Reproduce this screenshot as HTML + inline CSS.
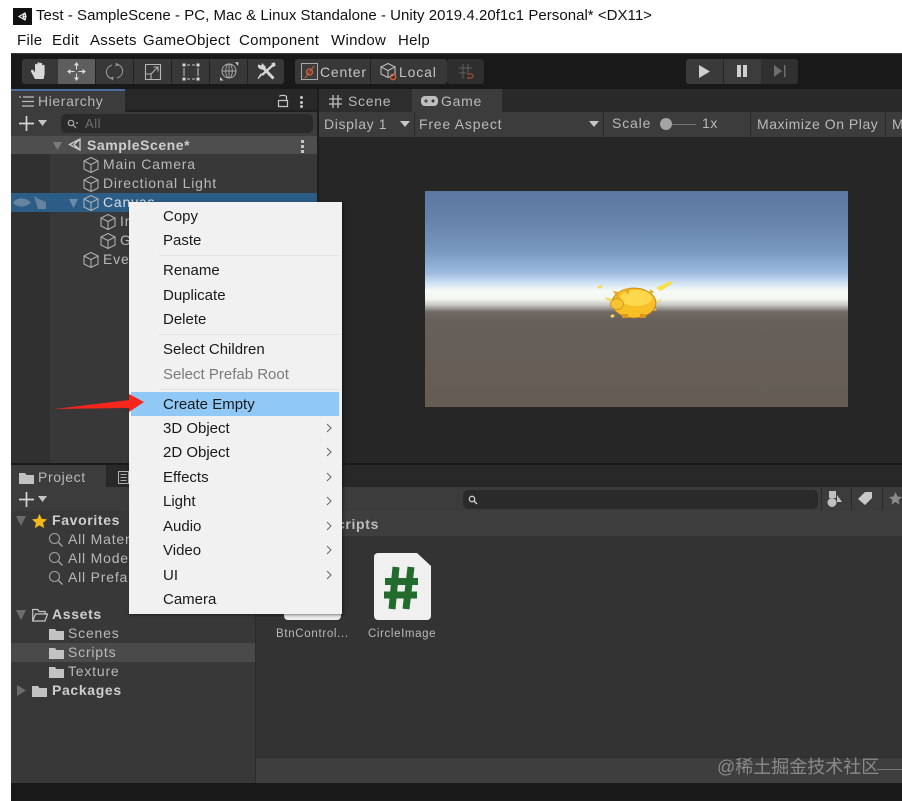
<!DOCTYPE html>
<html><head><meta charset="utf-8"><style>
html,body{margin:0;padding:0;background:#fff}
#r{position:relative;width:902px;height:801px;overflow:hidden;background:#fff;font-family:"Liberation Sans","Noto Sans CJK SC",sans-serif;filter:blur(.35px)}
#r div,#r span,#r svg{position:absolute}
.t{white-space:nowrap;color:#b9b9b9;font-size:14px;line-height:18px;letter-spacing:.8px}
.w{color:#cecece;font-weight:bold;letter-spacing:.65px}
.m{white-space:nowrap;color:#1a1a1a;font-size:15px;line-height:20px;left:163px}
.h{white-space:nowrap;color:#111;font-size:15px;line-height:18px;top:32px;letter-spacing:.3px}
.a{left:324px;width:10px;height:12px}
.c{width:18px;height:18px}
.s{width:16px;height:16px}
.f{width:15px;height:12px}
</style></head><body><div id="r">
<svg width="0" height="0"><defs>
<symbol id="cube" viewBox="0 0 18 18"><path d="M9 1.500 16 5v8l-7 3.500L2 13V5zM2 5l7 3.500L16 5M9 8.500v8" fill="none" stroke="#adadad" stroke-width="1.100"/></symbol>
<symbol id="mag" viewBox="0 0 16 16"><circle cx="6.500" cy="6.500" r="5" fill="none" stroke="#a0a0a0" stroke-width="1.100"/><path d="M10.500 10.500 14.500 14.500" stroke="#a0a0a0" stroke-width="1.500"/></symbol>
<symbol id="fold" viewBox="0 0 15 12"><path d="M0 1h6l1.500 2H15v9H0z" fill="#c2c2c2"/></symbol>
<symbol id="ch" viewBox="0 0 10 12"><path d="M3 2 7 6l-4 4" fill="none" stroke="#666" stroke-width="1"/></symbol>
</defs></svg>

<!-- title -->
<div style="left:13px;top:8px;width:19px;height:17px;background:#111"></div>
<svg style="left:17px;top:10px" width="12" height="13" viewBox="0 0 12 13"><path d="M2 6.500 8 3l1 3.500-1 3.500zM8 3 6 6.500h3M8 10 6 6.500" fill="none" stroke="#eee" stroke-width="1.200"/></svg>
<div style="left:36px;top:7px;white-space:nowrap;color:#111;font-size:15px;line-height:18px;letter-spacing:.03px">Test - SampleScene - PC, Mac &amp; Linux Standalone - Unity 2019.4.20f1c1 Personal* &lt;DX11&gt;</div>
<div class="h" style="left:17px">File</div>
<div class="h" style="left:52px">Edit</div>
<div class="h" style="left:90px">Assets</div>
<div class="h" style="left:143px">GameObject</div>
<div class="h" style="left:239px">Component</div>
<div class="h" style="left:331px">Window</div>
<div class="h" style="left:398px">Help</div>

<!-- main bg -->
<div style="left:11px;top:53px;width:891px;height:748px;background:#191919"></div>
<div style="left:11px;top:53px;width:891px;height:1px;background:#3a3a3a"></div>

<!-- toolbar buttons -->
<div style="left:22px;top:59px;width:262px;height:25px;background:#383838;border-radius:3px"></div>
<div style="left:58px;top:59px;width:37px;height:25px;background:#5e5e5e"></div>
<div style="left:95px;top:59px;width:1px;height:25px;background:#222"></div>
<div style="left:133px;top:59px;width:1px;height:25px;background:#222"></div>
<div style="left:171px;top:59px;width:1px;height:25px;background:#222"></div>
<div style="left:209px;top:59px;width:1px;height:25px;background:#222"></div>
<div style="left:247px;top:59px;width:1px;height:25px;background:#222"></div>
<svg style="left:30px;top:61px" width="19" height="20" viewBox="0 0 19 20"><path d="M5 18 1 10.500C.5 9 2.300 8 3.500 9.500L5 11.500V4c0-1.700 2.400-1.700 2.400 0v4V2.500c0-1.700 2.400-1.700 2.400 0V8V3c0-1.700 2.400-1.700 2.400 0v5.500V5c0-1.700 2.400-1.700 2.400 0v8l-1 5z" fill="#d8d8d8"/></svg>
<svg style="left:67px;top:62px" width="19" height="19" viewBox="0 0 19 19"><path d="M9.500 3v4.500M9.500 11.500V16M3 9.500h4.500M11.500 9.500H16" stroke="#ddd" stroke-width="1"/><path d="M9.500 0 7 3.500h5zM9.500 19 7 15.500h5zM0 9.500 3.500 7v5zM19 9.500 15.500 7v5z" fill="#ddd"/></svg>
<svg style="left:105px;top:62px" width="19" height="19" viewBox="0 0 19 19"><path d="M7 3C3 4.500 1 7.500 1.500 11 2 13.500 3.500 15.500 6 16.500M12 16c4-1.500 6-4.500 5.500-8C17 5.500 15.500 3.500 13 2.500" fill="none" stroke="#999" stroke-width="1.100"/><path d="M11 .5l3 2.500-3.500 1.500zM8 18.500l-3-2.500 3.500-1.500z" fill="#999"/></svg>
<svg style="left:144px;top:63px" width="18" height="18" viewBox="0 0 18 18"><path d="M1.500 1.500h15v15h-15zM1.500 11h5.500v5.500M7 11l7-7M9.500 4H14v4.500" fill="none" stroke="#b5b5b5" stroke-width="1.100"/></svg>
<svg style="left:182px;top:63px" width="18" height="18" viewBox="0 0 18 18"><path d="M5 2h3M10 2h3M5 16h3M10 16h3M2 5v8M16 5v8" stroke="#c5c5c5" stroke-width="1"/><path d="M.5.500h3v3h-3zM14.500.500h3v3h-3zM.5 14.500h3v3h-3zM14.500 14.500h3v3h-3z" fill="#d8d8d8"/></svg>
<svg style="left:218px;top:60px" width="22" height="22" viewBox="0 0 22 22"><circle cx="11" cy="11" r="7" fill="none" stroke="#aaa" stroke-width="1"/><ellipse cx="11" cy="11" rx="3.300" ry="7" fill="none" stroke="#aaa" stroke-width=".9"/><path d="M4 11h14M11 4v14" stroke="#aaa" stroke-width=".9"/><path d="M17 2l3.500.5-.5 3.500zM2 17l3.500 3.500L2 20.500z" fill="#ccc"/></svg>
<svg style="left:257px;top:62px" width="19" height="19" viewBox="0 0 19 19"><path d="M4.500 4 16.500 16.500" stroke="#d5d5d5" stroke-width="3"/><path d="M1 2.500a4 4 0 0 0 6.500 4L9 5 5 1 4.500 3.500z" fill="#d5d5d5"/><path d="M16 3 5 13" stroke="#d5d5d5" stroke-width="2.400"/><path d="M14.500 1 18 .5l.5 3.500-3 1zM6 12 1.500 17l-1-.5 3-5z" fill="#d5d5d5"/></svg>

<div style="left:295px;top:59px;width:75px;height:25px;background:#383838;border-radius:3px 0 0 3px"></div>
<div style="left:370px;top:59px;width:76px;height:25px;background:#383838;border-radius:0 3px 3px 0;border-left:1px solid #222"></div>
<svg style="left:301px;top:63px" width="17" height="17" viewBox="0 0 17 17"><rect x=".5" y=".5" width="16" height="16" fill="#3c3c3c" stroke="#aaa"/><circle cx="8.500" cy="9" r="3" fill="none" stroke="#d8603a" stroke-width="1.300"/><path d="M4 15 13 3" stroke="#d8603a"/></svg>
<div class="t" style="left:320px;top:63px;letter-spacing:.8px;color:#c4c4c4">Center</div>
<svg style="left:379px;top:62px" width="20" height="20" viewBox="0 0 20 20"><path d="M9 1.500 16 5v7l-7 3.500L2 12V5zM2 5l7 3.500L16 5M9 8.500v7" fill="none" stroke="#bbb" stroke-width="1.100"/><circle cx="14" cy="15" r="2.700" fill="none" stroke="#d8603a" stroke-width="1.300"/></svg>
<div class="t" style="left:399px;top:63px;letter-spacing:.85px;color:#c4c4c4">Local</div>
<div style="left:447px;top:59px;width:37px;height:25px;background:#2e2e2e;border-radius:3px"></div>
<svg style="left:458px;top:63px" width="16" height="17" viewBox="0 0 16 17"><path d="M5 1v15M10 1v9M1 5h13M1 10h7" stroke="#5f5f5f"/><path d="M9 11h4a2 2 0 0 1 0 4H9" fill="none" stroke="#8f4a30" stroke-width="1.400"/></svg>

<div style="left:686px;top:59px;width:37px;height:25px;background:#3a3a3a;border-radius:3px 0 0 3px"></div>
<div style="left:723px;top:59px;width:38px;height:25px;background:#3c3c3c;border-left:1px solid #262626"></div>
<div style="left:761px;top:59px;width:37px;height:25px;background:#303030;border-radius:0 3px 3px 0"></div>
<svg style="left:699px;top:65px" width="11" height="13"><path d="M0 0 11 6.500 0 13z" fill="#d0d0d0"/></svg>
<div style="left:737px;top:65px;width:4px;height:12px;background:#d0d0d0"></div>
<div style="left:743px;top:65px;width:4px;height:12px;background:#d0d0d0"></div>
<svg style="left:774px;top:65px" width="12" height="12"><path d="M0 0 8 6 0 12z" fill="#6e6e6e"/><path d="M10 0h1.500v12H10z" fill="#6e6e6e"/></svg>

<!-- hierarchy -->
<div style="left:11px;top:89px;width:306px;height:374px;background:#383838"></div>
<div style="left:11px;top:89px;width:306px;height:22px;background:#282828"></div>
<div style="left:11px;top:89px;width:114px;height:23px;background:#3c3c3c"></div>
<div style="left:11px;top:89px;width:114px;height:2px;background:#4a6d9f"></div>
<div style="left:125px;top:110px;width:192px;height:2px;background:#1f1f1f"></div>
<svg style="left:19px;top:96px" width="15" height="11"><path d="M0 1h2M4 1h11M3 5.500h12M3 10h12" stroke="#bbb" stroke-width="1.200"/></svg>
<div class="t" style="left:38px;top:92px;letter-spacing:.6px">Hierarchy</div>
<svg style="left:277px;top:94px" width="12" height="14" viewBox="0 0 12 14"><path d="M2.500 2.500C3 1 8.500 1 9.500 2.500V6.500M1.500 6.500h9v6h-9z" fill="none" stroke="#c5c5c5" stroke-width="1.200"/></svg>
<div style="left:300px;top:96px;width:3px;height:3px;background:#c5c5c5;border-radius:2px"></div>
<div style="left:300px;top:100.500px;width:3px;height:3px;background:#c5c5c5;border-radius:2px"></div>
<div style="left:300px;top:105px;width:3px;height:3px;background:#c5c5c5;border-radius:2px"></div>

<div style="left:11px;top:112px;width:306px;height:24px;background:#3c3c3c"></div>
<svg style="left:19px;top:116px" width="15" height="15"><path d="M7.500 0v15M0 7.500h15" stroke="#d5d5d5" stroke-width="1.700"/></svg>
<svg style="left:38px;top:120px" width="9" height="6"><path d="M0 0h9L4.500 6z" fill="#c5c5c5"/></svg>
<div style="left:61px;top:114px;width:252px;height:19px;background:#2a2a2a;border-radius:5px"></div>
<svg style="left:67px;top:119px" width="11" height="10"><circle cx="4" cy="4" r="2.700" fill="none" stroke="#aaa" stroke-width="1.200"/><path d="M6 6l3 3M9 4h2" stroke="#aaa" stroke-width="1.200"/></svg>
<div class="t" style="left:85px;top:115px;font-size:13px;color:#6f6f6f;letter-spacing:.55px">All</div>

<div style="left:11px;top:136px;width:306px;height:18px;background:#4e4e4e"></div>
<div style="left:11px;top:154px;width:39px;height:309px;background:#303030"></div>
<div style="left:50px;top:154px;width:267px;height:309px;background:#383838"></div>
<svg style="left:53px;top:141px" width="9" height="9"><path d="M0 1h9L4.500 9z" fill="#7b7b7b"/></svg>
<svg style="left:67px;top:137px" width="15" height="15" viewBox="0 0 15 15"><path d="M13 2 2.500 7.500 13 13zM13 2 7 7.500l6 5.500" fill="none" stroke="#ccc" stroke-width="1.300"/></svg>
<div class="t w" style="left:87px;top:136px;letter-spacing:.55px">SampleScene*</div>
<div style="left:301px;top:140px;width:3px;height:3px;background:#c5c5c5"></div>
<div style="left:301px;top:145px;width:3px;height:3px;background:#c5c5c5"></div>
<div style="left:301px;top:150px;width:3px;height:3px;background:#c5c5c5"></div>

<svg class="c" style="left:82px;top:156px"><use href="#cube"/></svg>
<div class="t" style="left:103px;top:155px">Main Camera</div>
<svg class="c" style="left:82px;top:175px"><use href="#cube"/></svg>
<div class="t" style="left:103px;top:174px">Directional Light</div>
<div style="left:11px;top:193px;width:306px;height:19px;background:#2c5d87"></div>
<svg style="left:13px;top:197px" width="18" height="11"><path d="M0 5.500C4 0 13 0 18 5.500 13 11 4 11 0 5.500z" fill="#66849f"/></svg>
<svg style="left:33px;top:196px" width="13" height="13"><path d="M1 0l5 3 7 3v7H5z" fill="#66849f"/></svg>
<svg style="left:69px;top:199px" width="9" height="9"><path d="M0 0h9L4.500 9z" fill="#6b8bab"/></svg>
<svg class="c" style="left:82px;top:194px"><use href="#cube"/></svg>
<div class="t" style="left:103px;top:193px;color:#d5dde5">Canvas</div>
<svg class="c" style="left:99px;top:213px"><use href="#cube"/></svg>
<div class="t" style="left:120px;top:212px">Image</div>
<svg class="c" style="left:99px;top:232px"><use href="#cube"/></svg>
<div class="t" style="left:120px;top:231px">GameObject</div>
<svg class="c" style="left:82px;top:251px"><use href="#cube"/></svg>
<div class="t" style="left:103px;top:250px">EventSystem</div>

<!-- game panel -->
<div style="left:317px;top:89px;width:2px;height:374px;background:#1e1e1e"></div>
<div style="left:319px;top:89px;width:583px;height:374px;background:#262626"></div>
<div style="left:319px;top:89px;width:583px;height:23px;background:#292929"></div>
<div style="left:319px;top:89px;width:93px;height:23px;background:#2d2d2d"></div>
<div style="left:412px;top:89px;width:90px;height:23px;background:#3c3c3c"></div>
<svg style="left:329px;top:95px" width="13" height="13"><path d="M4 0v13M9 0v13M0 4h13M0 9h13" stroke="#c0c0c0" stroke-width="1.300"/></svg>
<div class="t" style="left:348px;top:92px;letter-spacing:.7px">Scene</div>
<svg style="left:421px;top:96px" width="17" height="10"><rect width="17" height="10" rx="4" fill="#bfbfbf"/><path d="M3 5h4M5 3v4" stroke="#333"/><circle cx="12" cy="5" r="1.500" fill="#333"/></svg>
<div class="t" style="left:441px;top:92px;letter-spacing:.7px">Game</div>
<div style="left:319px;top:112px;width:583px;height:25px;background:#3c3c3c"></div>
<div style="left:414px;top:112px;width:1px;height:25px;background:#2a2a2a"></div>
<div style="left:603px;top:112px;width:1px;height:25px;background:#2a2a2a"></div>
<div style="left:750px;top:112px;width:1px;height:25px;background:#2a2a2a"></div>
<div style="left:885px;top:112px;width:1px;height:25px;background:#2a2a2a"></div>
<div class="t" style="left:324px;top:115px;letter-spacing:.62px">Display 1</div>
<svg style="left:400px;top:121px" width="10" height="6"><path d="M0 0h10L5 6z" fill="#c5c5c5"/></svg>
<div class="t" style="left:419px;top:115px;letter-spacing:.78px">Free Aspect</div>
<svg style="left:589px;top:121px" width="10" height="6"><path d="M0 0h10L5 6z" fill="#c5c5c5"/></svg>
<div class="t" style="left:612px;top:114px;letter-spacing:.85px">Scale</div>
<div style="left:670px;top:124px;width:26px;height:1px;background:#777"></div>
<div style="left:660px;top:118px;width:12px;height:12px;border-radius:50%;background:#a5a5a5"></div>
<div class="t" style="left:702px;top:114px;letter-spacing:.6px">1x</div>
<div class="t" style="left:757px;top:115px;letter-spacing:.53px">Maximize On Play</div>
<div class="t" style="left:892px;top:115px">Mute</div>

<!-- game view -->
<div style="left:425px;top:191px;width:423px;height:216px;background:linear-gradient(#5c77a1 0,#6683ab 30px,#7898c0 60px,#9dbbdf 82px,#d0e2f5 92px,#f6fbf6 100px,#f3f7f0 108px,#c5c7c0 114px,#716964 121px,#665f5a 130px,#655d54 216px)"></div>
<svg style="left:590px;top:270px" width="90" height="60" viewBox="590 270 90 60">
<path d="M656 288 670 281 673 283 661 291z" fill="#f9df4a"/>
<path d="M597 287l4-2 2 1-3 3zM605 297l7 2 2 3-7-2zM610 316l3-2 2 2-3 2zM657 301l5-2-3 4zM652 307l5 3-5 1z" fill="#f5da55"/>
<ellipse cx="634" cy="303" rx="22" ry="15" fill="#f9bf26" stroke="#b67c14" stroke-width=".8"/>
<ellipse cx="636" cy="298" rx="16" ry="8" fill="#fdd84c"/>
<ellipse cx="617" cy="304" rx="6.500" ry="5.500" fill="#f8c330" stroke="#c5881a" stroke-width=".7"/>
<path d="M613 291l6 1-1 7zM624 289l6-1-2 7zM650 289l4 3-4 2z" fill="#e9a724"/>
<path d="M622 314h6v4h-6zM640 314h6v4h-6z" fill="#d8961c"/>
</svg>

<!-- bottom separator -->
<div style="left:11px;top:463px;width:891px;height:2px;background:#1a1a1a"></div>

<!-- project -->
<div style="left:11px;top:465px;width:891px;height:22px;background:#282828"></div>
<div style="left:11px;top:465px;width:95px;height:22px;background:#3c3c3c"></div>
<svg class="f" style="left:19px;top:472px"><use href="#fold"/></svg>
<div class="t" style="left:38px;top:468px;letter-spacing:.6px">Project</div>
<svg style="left:118px;top:471px" width="11" height="13"><path d="M.5.500h10v12H.5z" fill="#2b2b2b" stroke="#b0b0b0"/><path d="M2.500 3.500h6M2.500 6.500h6M2.500 9.500h6" stroke="#b0b0b0"/></svg>
<div style="left:11px;top:487px;width:891px;height:24px;background:#3c3c3c"></div>
<svg style="left:19px;top:492px" width="15" height="15"><path d="M7.500 0v15M0 7.500h15" stroke="#d5d5d5" stroke-width="1.700"/></svg>
<svg style="left:38px;top:496px" width="9" height="6"><path d="M0 0h9L4.500 6z" fill="#c5c5c5"/></svg>
<div style="left:463px;top:490px;width:355px;height:19px;background:#2a2a2a;border-radius:5px"></div>
<svg style="left:468px;top:495px" width="10" height="10"><circle cx="4" cy="4" r="2.700" fill="none" stroke="#ccc" stroke-width="1.300"/><path d="M6 6l3 3" stroke="#ccc" stroke-width="1.500"/></svg>
<div style="left:821px;top:488px;width:1px;height:22px;background:#2a2a2a"></div>
<div style="left:851px;top:488px;width:1px;height:22px;background:#2a2a2a"></div>
<div style="left:882px;top:488px;width:1px;height:22px;background:#2a2a2a"></div>
<svg style="left:827px;top:490px" width="16" height="17"><circle cx="5" cy="12.500" r="4.500" fill="#c0c0c0"/><rect x="2" y="1" width="7" height="7" fill="#c0c0c0"/><path d="M10 5l5 7h-5z" fill="#c0c0c0"/></svg>
<svg style="left:858px;top:492px" width="14" height="13"><path d="M0 7 7 0h7v6l-7 7z" fill="#c8c8c8"/></svg>
<svg style="left:889px;top:492px" width="13" height="13"><path d="M6.500 0l2 4.500 4.500.5-3.500 3 1 4.500-4-2.500-4 2.500 1-4.500L0 5l4.500-.5z" fill="#8a8a8a"/></svg>

<div style="left:11px;top:511px;width:245px;height:272px;background:#383838"></div>
<div style="left:255px;top:511px;width:1px;height:272px;background:#2c2c2c"></div>
<div style="left:256px;top:511px;width:646px;height:25px;background:#3e3e3e"></div>
<div style="left:256px;top:536px;width:646px;height:222px;background:#333"></div>
<div style="left:256px;top:758px;width:646px;height:25px;background:#3e3e3e"></div>
<div style="left:256px;top:757px;width:646px;height:1px;background:#2c2c2c"></div>

<svg style="left:16px;top:516px" width="10" height="10"><path d="M0 0h10L5 10z" fill="#6c6c6c"/></svg>
<svg style="left:32px;top:514px" width="15" height="15" viewBox="0 0 15 15"><path d="M7.500 0l2.200 4.800 5.300.6-3.900 3.500 1.100 5.200-4.700-2.700-4.700 2.700 1.100-5.200L0 5.400l5.300-.6z" fill="#f4b81c"/></svg>
<div class="t w" style="left:52px;top:511px">Favorites</div>
<svg class="s" style="left:48px;top:532px"><use href="#mag"/></svg>
<div class="t" style="left:68px;top:530px">All Materials</div>
<svg class="s" style="left:48px;top:551px"><use href="#mag"/></svg>
<div class="t" style="left:68px;top:549px">All Models</div>
<svg class="s" style="left:48px;top:570px"><use href="#mag"/></svg>
<div class="t" style="left:68px;top:568px">All Prefabs</div>

<svg style="left:16px;top:610px" width="10" height="10"><path d="M0 0h10L5 10z" fill="#6c6c6c"/></svg>
<svg style="left:32px;top:608px" width="16" height="14" viewBox="0 0 16 14"><path d="M.7 13V1.500h5l1.500 2h6V6M.7 13 3.500 6H15.500L13 13z" fill="none" stroke="#c5c5c5" stroke-width="1.200"/></svg>
<div class="t w" style="left:52px;top:605px">Assets</div>
<svg class="f" style="left:49px;top:628px"><use href="#fold"/></svg>
<div class="t" style="left:68px;top:624px">Scenes</div>
<div style="left:11px;top:643px;width:244px;height:19px;background:#4a4a4a"></div>
<svg class="f" style="left:49px;top:647px"><use href="#fold"/></svg>
<div class="t" style="left:68px;top:643px">Scripts</div>
<svg class="f" style="left:49px;top:666px"><use href="#fold"/></svg>
<div class="t" style="left:68px;top:662px">Texture</div>
<svg style="left:17px;top:685px" width="9" height="11"><path d="M0 0l9 5.500L0 11z" fill="#6c6c6c"/></svg>
<svg class="f" style="left:32px;top:685px"><use href="#fold"/></svg>
<div class="t w" style="left:52px;top:681px">Packages</div>

<div class="t w" style="left:327px;top:515px;color:#bcbcbc">Scripts</div>
<div style="left:284px;top:600px;width:57px;height:20px;background:#eee;border-radius:0 0 4px 4px"></div>
<div class="t" style="left:276px;top:625px;font-size:11.500px;letter-spacing:.68px">BtnControl...</div>
<svg style="left:374px;top:553px" width="57" height="67" viewBox="0 0 57 67"><path d="M4 0H43L57 13V63a4 4 0 0 1-4 4H4a4 4 0 0 1-4-4V4a4 4 0 0 1 4-4z" fill="#eff0ef"/><path d="M22 14 18 56M37 14 32 56M11 28.500H44M10 42H43" stroke="#236b2c" stroke-width="7" fill="none"/></svg>
<div class="t" style="left:368px;top:625px;font-size:11.500px;letter-spacing:.62px">CircleImage</div>

<div style="left:717px;top:755px;white-space:nowrap;font-size:18px;line-height:24px;color:#8a8a8a">@稀土掘金技术社区</div>
<div style="left:877px;top:769px;width:25px;height:1px;background:#777"></div>

<!-- context menu -->
<div style="left:129px;top:202px;width:213px;height:412px;background:#f1f1f1;box-shadow:1px 1px 3px rgba(0,0,0,.5)"></div>
<div style="left:159px;top:255px;width:181px;height:1px;background:#e2e2e2"></div>
<div style="left:159px;top:334px;width:181px;height:1px;background:#e2e2e2"></div>
<div style="left:159px;top:389px;width:181px;height:1px;background:#e2e2e2"></div>
<div style="left:131px;top:392px;width:208px;height:24px;background:#90c8f6"></div>
<div class="m" style="top:207px">Copy</div>
<div class="m" style="top:231px">Paste</div>
<div class="m" style="top:261px">Rename</div>
<div class="m" style="top:286px">Duplicate</div>
<div class="m" style="top:310px">Delete</div>
<div class="m" style="top:340px">Select Children</div>
<div class="m" style="top:365px;color:#7a7a7a">Select Prefab Root</div>
<div class="m" style="top:395px">Create Empty</div>
<div class="m" style="top:419px">3D Object</div>
<div class="m" style="top:443px">2D Object</div>
<div class="m" style="top:468px">Effects</div>
<div class="m" style="top:492px">Light</div>
<div class="m" style="top:517px">Audio</div>
<div class="m" style="top:541px">Video</div>
<div class="m" style="top:566px">UI</div>
<div class="m" style="top:590px">Camera</div>
<svg class="a" style="top:422px"><use href="#ch"/></svg>
<svg class="a" style="top:446px"><use href="#ch"/></svg>
<svg class="a" style="top:471px"><use href="#ch"/></svg>
<svg class="a" style="top:495px"><use href="#ch"/></svg>
<svg class="a" style="top:520px"><use href="#ch"/></svg>
<svg class="a" style="top:544px"><use href="#ch"/></svg>
<svg class="a" style="top:569px"><use href="#ch"/></svg>

<!-- arrow -->
<svg style="left:50px;top:390px" width="96" height="24" viewBox="0 0 96 24"><path d="M4 19 79 10 79 4 94 12 79 22 79 18z" fill="#f5261c"/></svg>
</div></body></html>
